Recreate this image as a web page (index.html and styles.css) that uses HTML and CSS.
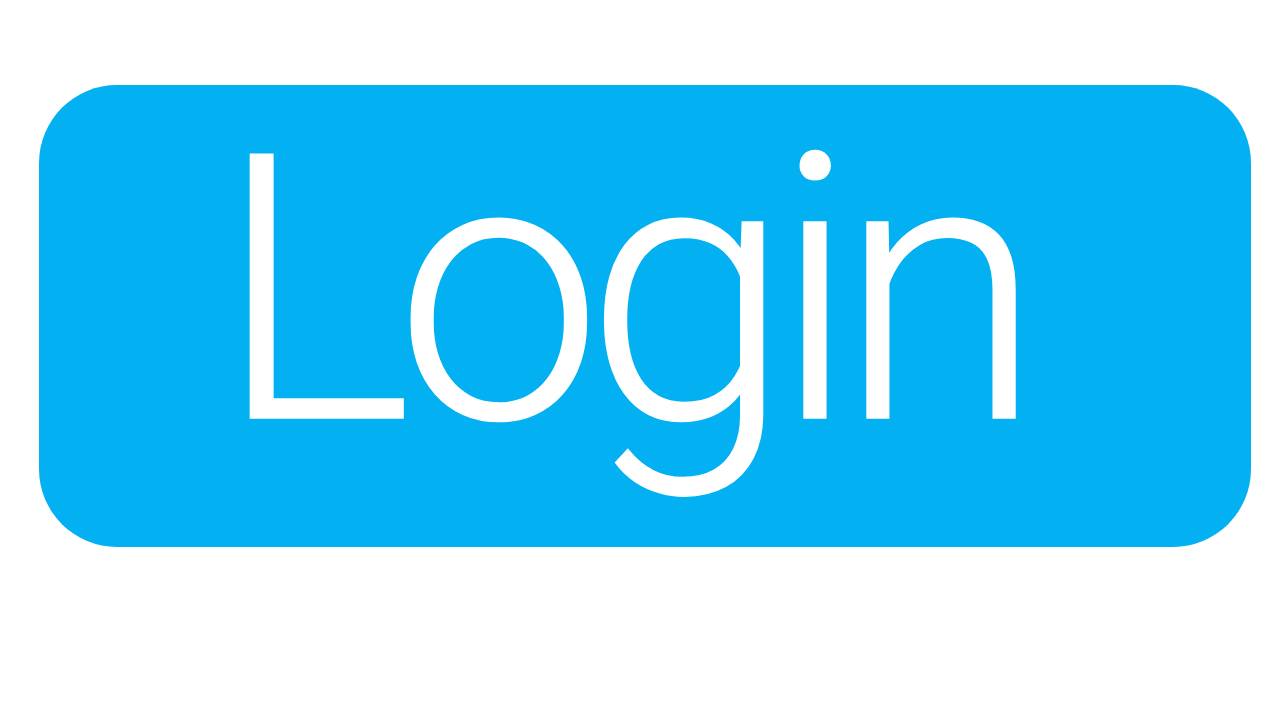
FILE: index.html
```html
<!DOCTYPE html>
<html>
<head>
<meta charset="utf-8">
<link rel="stylesheet" href="styles.css">
</head>
<body>
<div class="page">
  <button class="login">Login</button>
</div>
</body>
</html>
```
FILE: styles.css
```css
html, body { margin: 0; padding: 0; background: #ffffff; }
.page { width: 1280px; height: 720px; padding: 85px 0 0 39px; box-sizing: border-box; }
.login {
  display: flex; align-items: flex-start; justify-content: flex-start;
  width: 1212px; height: 462px; border: none; border-radius: 78px;
  background: #03b1f2; color: #fff; padding: 0 0 0 178px; margin: 0;
  font-family: Roboto, sans-serif; font-weight: 300; font-size: 371px; line-height: 414px;
  letter-spacing: -17.8px;
  -webkit-text-stroke: 1.5px #fff;
  box-sizing: border-box;
}
```
